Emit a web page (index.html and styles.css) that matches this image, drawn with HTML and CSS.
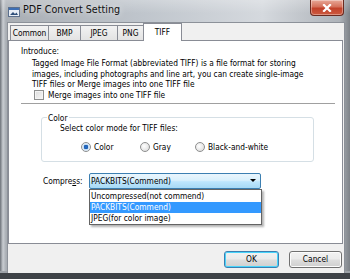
FILE: index.html
```html
<!DOCTYPE html>
<html lang="en">
<head>
  <meta charset="UTF-8">
  <title>PDF Convert Setting</title>
  <link rel="stylesheet" href="styles.css">
</head>
<body>
  <div class="window">
    <div class="titlebar">
      <svg class="app-icon" width="12" height="10" viewBox="0 0 12 10">
        <rect x="0.5" y="0.5" width="11" height="9" fill="#e8eef6" stroke="#5b6f8c"/>
        <rect x="1" y="1" width="10" height="2" fill="#3d6fb5"/>
        <path d="M2 8 L5 5 L7 7 L8.5 5.5 L10 8 Z" fill="#2f4f7a"/>
      </svg>
      <span class="title">PDF Convert Setting</span>
      <div class="close-btn">
        <svg width="10" height="8" viewBox="0 0 10 8">
          <path d="M2 1 L8 7 M8 1 L2 7" stroke="#fff" stroke-width="2.2" stroke-linecap="square"/>
        </svg>
      </div>
    </div>

    <div class="client">
      <div class="tabs">
        <div class="tab">Common</div>
        <div class="tab">BMP</div>
        <div class="tab">JPEG</div>
        <div class="tab">PNG</div>
        <div class="tab active">TIFF</div>
      </div>

      <div class="panel">
        <div class="intro-label">Introduce:</div>
        <p class="intro-text">Tagged Image File Format (abbreviated TIFF) is a file format for storing images, including photographs and line art, you can create single-image TIFF files or Merge images into one TIFF file</p>
        <label class="check-row">
          <span class="checkbox"></span>
          <span>Merge images into one TIFF file</span>
        </label>
        <div class="separator"></div>

        <fieldset class="group">
          <legend>Color</legend>
          <div class="group-caption">Select color mode for TIFF files:</div>
          <div class="radio-row">
            <label class="radio-item"><span class="radio checked"></span>Color</label>
            <label class="radio-item"><span class="radio"></span>Gray</label>
            <label class="radio-item"><span class="radio"></span>Black-and-white</label>
          </div>
        </fieldset>

        <div class="compress-row">
          <span class="compress-label">Compre<u>s</u>s:</span>
          <div class="combo-wrap">
            <div class="combo">
              <span>PACKBITS(Commend)</span>
              <span class="combo-arrow"></span>
            </div>
            <ul class="dropdown">
              <li>Uncompressed(not commend)</li>
              <li class="selected">PACKBITS(Commend)</li>
              <li>JPEG(for color image)</li>
            </ul>
          </div>
        </div>
      </div>

      <div class="buttons">
        <div class="btn default">OK</div>
        <div class="btn">Cancel</div>
      </div>
    </div>
  </div>
</body>
</html>
```

FILE: styles.css
```css
body {
  margin: 0;
  width: 350px;
  height: 279px;
  overflow: hidden;
  font-family: 'DejaVu Sans Condensed', 'DejaVu Sans', sans-serif;
  font-size: 8.3px;
  color: #000;
}

.window {
  width: 350px;
  height: 279px;
  box-sizing: border-box;
  display: flex;
  flex-direction: column;
  background: linear-gradient(to right, #6b7077 0px, #c9cdd2 3px, #a9aeb4 6px, #bfc5cc 40%, #d5d9de 75%, #aeb3b9 97%, #7d8288 100%);
  border-bottom: 6px solid #3e4247;
  box-shadow: inset 0 -2px 0 #9da2a8;
}

.titlebar {
  height: 22px;
  display: flex;
  align-items: flex-start;
  background: linear-gradient(to bottom, rgba(255,255,255,0.25), rgba(255,255,255,0) 60%);
}

.app-icon {
  margin: 7px 0 0 8px;
}

.title {
  margin: 4px 0 0 3px;
  font-family: 'DejaVu Sans', sans-serif;
  font-size: 9.6px;
  color: #111;
  text-shadow: 0 0 6px rgba(255,255,255,0.9);
}

.close-btn {
  margin-left: auto;
  margin-right: 6px;
  width: 34px;
  height: 16px;
  box-sizing: border-box;
  border: 1px solid #6b2a1f;
  border-top: none;
  border-radius: 0 0 4px 4px;
  background: linear-gradient(to bottom, #e8a898 0%, #d5715b 45%, #c2412a 55%, #cc5a3f 100%);
  display: flex;
  align-items: center;
  justify-content: center;
  box-shadow: inset 0 0 0 1px rgba(255,255,255,0.35);
}

.client {
  flex: 1;
  margin: 0 5px 0 7px;
  background: #f0f0f0;
  border: 1px solid #8c9199;
  border-bottom: none;
  display: flex;
  flex-direction: column;
}

.tabs {
  display: flex;
  align-items: flex-end;
  height: 17px;
  padding-left: 2px;
}

.tab {
  height: 15px;
  box-sizing: border-box;
  padding: 0;
  border: 1px solid #898c95;
  border-bottom: none;
  margin-right: -1px;
  background: linear-gradient(to bottom, #f2f2f2, #e3e3e3);
  line-height: 14px;
  text-align: center;
}

.tab:nth-child(1) { width: 39px; }
.tab:nth-child(2) { width: 33px; }
.tab:nth-child(3) { width: 38px; }
.tab:nth-child(4) { width: 27px; }

.tab.active {
  width: 39px;
  height: 18px;
  background: #fff;
  position: relative;
  z-index: 1;
  margin-bottom: -1px;
  line-height: 16px;
}

.panel {
  height: 204px;
  box-sizing: border-box;
  background: #fff;
  border: 1px solid #898c95;
  margin-right: 1px;
  padding: 5px 0 0 12px;
}

.intro-label {
  line-height: 11px;
}

.intro-text {
  margin: 1px 0 0 11px;
  width: 272px;
  line-height: 10.5px;
}

.check-row {
  display: flex;
  align-items: center;
  gap: 4px;
  margin: 0 0 0 13px;
  line-height: 10px;
}

.checkbox {
  width: 8px;
  height: 8px;
  border: 1px solid #8e8f8f;
  background: linear-gradient(135deg, #dcdcdc, #f7f7f7);
  box-shadow: inset 0 0 0 1px #f4f4f4;
}

.separator {
  height: 0;
  border-top: 1px solid #a0a0a0;
  border-bottom: 1px solid #fff;
  margin: 3px 0 0 0;
  width: 314px;
}

.group {
  margin: 9px 0 0 20px;
  width: 273px;
  height: 48px;
  box-sizing: border-box;
  border: 1px solid #d5dfe5;
  border-radius: 3px;
  padding: 0 0 0 18px;
  position: relative;
}

.group legend {
  padding: 0 1px;
  margin-left: -13px;
  line-height: 8px;
}

.group-caption {
  margin-top: 1px;
  line-height: 10px;
}

.radio-row {
  display: flex;
  margin: 9px 0 0 21px;
}

.radio-item {
  display: flex;
  align-items: center;
  gap: 3px;
  line-height: 10px;
}

.radio-item:nth-child(1) { width: 59px; }
.radio-item:nth-child(2) { width: 55px; }

.radio {
  width: 8px;
  height: 8px;
  border-radius: 50%;
  border: 1px solid #8e8f8f;
  background: radial-gradient(circle at 40% 40%, #fff, #d6d6d6);
}

.radio.checked {
  background: radial-gradient(circle, #2a6fc9 0, #1a5fb4 2px, #c6ddf3 2.5px, #e6f0fa 4px);
}

.compress-row {
  display: flex;
  align-items: flex-start;
  margin: 11px 0 0 22px;
}

.compress-label {
  width: 46px;
  line-height: 16px;
}

.compress-label u {
  text-decoration-thickness: 1px;
}

.combo-wrap {
  position: relative;
}

.combo {
  width: 172px;
  height: 16px;
  box-sizing: border-box;
  border: 1px solid #3c7fb1;
  border-radius: 2px;
  background: linear-gradient(to bottom, #eaf6fd 0%, #d9f0fc 45%, #bee6fd 55%, #a7d9f5 100%);
  display: flex;
  align-items: center;
  justify-content: space-between;
  padding: 0 4px 0 1px;
}

.combo-arrow {
  width: 0;
  height: 0;
  border-left: 3px solid transparent;
  border-right: 3px solid transparent;
  border-top: 3px solid #000;
}

.dropdown {
  position: absolute;
  top: 16px;
  left: 0;
  width: 173px;
  box-sizing: border-box;
  margin: 0;
  padding: 0;
  list-style: none;
  background: #fff;
  border: 1px solid #646464;
  box-shadow: 2px 2px 2px rgba(0,0,0,0.3);
}

.dropdown li {
  height: 11px;
  line-height: 11px;
  padding-left: 1px;
}

.dropdown li:first-child {
  margin-top: 1px;
}

.dropdown li.selected {
  background: #3399ff;
  color: #fff;
}

.buttons {
  display: flex;
  justify-content: flex-end;
  gap: 10px;
  padding: 7px 2px 0 0;
}

.btn {
  width: 53px;
  height: 17px;
  box-sizing: border-box;
  border: 1px solid #707070;
  border-radius: 3px;
  background: linear-gradient(to bottom, #f2f2f2 0%, #ebebeb 45%, #dddddd 55%, #cfcfcf 100%);
  box-shadow: inset 0 0 0 1px #fcfcfc;
  text-align: center;
  line-height: 15px;
}

.btn.default {
  width: 55px;
  border-color: #3c7fb1;
  box-shadow: inset 0 0 0 1px #48d4fb;
}
```
